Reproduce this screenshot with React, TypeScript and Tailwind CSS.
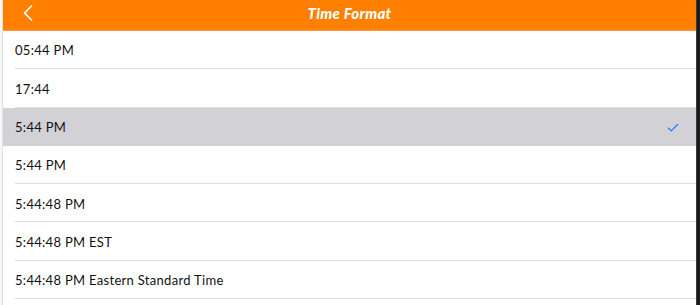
import { Check, ChevronLeft } from 'lucide-react';

const formats = [
  '05:44 PM',
  '17:44',
  '5:44 PM',
  '5:44 PM',
  '5:44:48 PM',
  '5:44:48 PM EST',
  '5:44:48 PM Eastern Standard Time',
];

const selected = 2;

export default function App() {
  return (
    <div className="w-[700px] h-[305px] flex overflow-hidden bg-white font-['Lato',_'Noto_Sans',_sans-serif]">
      {/* left edge of the view behind */}
      <div className="w-[3px] bg-[#f7f7f7] border-r border-[#e2e2e2] flex-shrink-0" />

      <div className="flex-1 flex flex-col min-w-0">
        {/* Nav bar */}
        <div className="h-[31px] flex-shrink-0 bg-[#ff7f00] border-b border-[#ff9a45] flex items-center relative">
          <ChevronLeft className="w-[28px] h-[28px] text-white ml-[11px] mb-[4px]" strokeWidth={1.5} />
          <span className="absolute left-0 right-0 text-center text-white text-[15px] font-black italic mb-[4px] tracking-[0.3px]">
            Time Format
          </span>
        </div>

        {/* List */}
        <div className="flex flex-col">
          {formats.map((f, i) => (
            <div
              key={i}
              className={
                i === selected
                  ? 'h-[38.3px] flex-shrink-0 flex items-center bg-[#d1d1d6] pl-[12px] pr-[16px]'
                  : 'h-[38.3px] flex-shrink-0 flex items-center pl-[12px]'
              }
            >
              <div
                className={
                  i === selected
                    ? 'flex-1 flex items-center h-full pt-[3px]'
                    : 'flex-1 flex items-center h-full pt-[3px] border-b border-[#dcdcdc]'
                }
              >
                <span className="text-[13px] text-[#111] tracking-[0.3px]">{f}</span>
                {i === selected && (
                  <Check className="ml-auto w-[14px] h-[14px] text-[#1a7cff]" strokeWidth={2} />
                )}
              </div>
            </div>
          ))}
        </div>
      </div>

      {/* right window edge */}
      <div className="w-[4px] bg-[#1b1b1b] border-l border-[#3a3a3a] flex-shrink-0" />
    </div>
  );
}
